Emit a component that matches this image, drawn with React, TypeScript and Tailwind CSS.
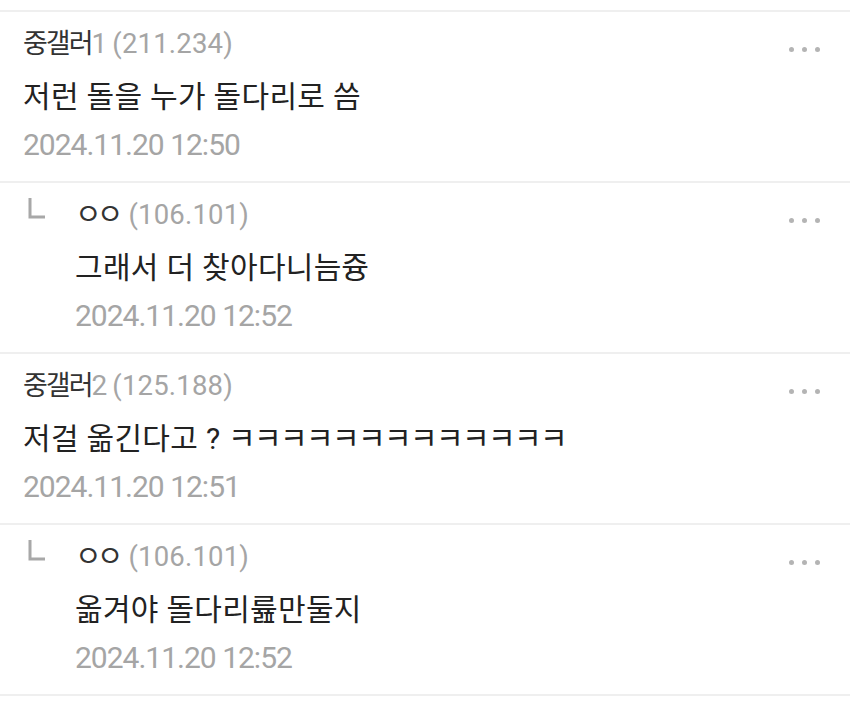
import type { ReactNode } from "react";

type Comment = {
  name: string;
  nameSuffix: string;
  ip: string;
  body: ReactNode;
  date: string;
  reply?: boolean;
};

const comments: Comment[] = [
  { name: "중갤러", nameSuffix: "1", ip: "(211.234)", body: "저런 돌을 누가 돌다리로 씀", date: "2024.11.20 12:50" },
  { name: "ㅇㅇ", nameSuffix: "", ip: "(106.101)", body: "그래서 더 찾아다니늠즁", date: "2024.11.20 12:52", reply: true },
  {
    name: "중갤러",
    nameSuffix: "2",
    ip: "(125.188)",
    body: (
      <>
        저걸 옮긴다고 ?&nbsp;<span className="tracking-[-1.6px]">ㅋㅋㅋㅋㅋㅋㅋㅋㅋㅋㅋㅋㅋ</span>
      </>
    ),
    date: "2024.11.20 12:51",
  },
  { name: "ㅇㅇ", nameSuffix: "", ip: "(106.101)", body: "옮겨야 돌다리륦만둘지", date: "2024.11.20 12:52", reply: true },
];

function MoreDots() {
  return (
    <div className="flex items-center gap-[8px] self-start pt-[21px]">
      <span className="h-[5px] w-[5px] rounded-full bg-[#b4b4b4]" />
      <span className="h-[5px] w-[5px] rounded-full bg-[#b4b4b4]" />
      <span className="h-[5px] w-[5px] rounded-full bg-[#b4b4b4]" />
    </div>
  );
}

function ReplyMark() {
  return (
    <svg width="20" height="22" viewBox="0 0 20 22" className="mt-[1px]">
      <path d="M3 0 V19 H18" fill="none" stroke="#a8a8a8" strokeWidth="3" />
    </svg>
  );
}

function CommentRow({ c }: { c: Comment }) {
  return (
    <div className="flex border-b-2 border-[#efefef] pl-[23px] pr-[30px] pt-[14px] pb-[18px]">
      {c.reply && (
        <div className="w-[52px] shrink-0 pl-[4px]">
          <ReplyMark />
        </div>
      )}
      <div className="flex-1">
        <div className="flex h-[36px] items-center leading-none">
          {c.reply ? (
            <span className="mr-[10px] text-[29px] tracking-[-5px] text-[#333]">{c.name}</span>
          ) : (
            <span className="text-[27px] tracking-[-2px] text-[#333]">{c.name}</span>
          )}
          {c.nameSuffix && <span className="mr-[5px] text-[28px] text-[#a5a5a5]">{c.nameSuffix}</span>}
          <span className="text-[27.5px] tracking-[0.2px] text-[#a5a5a5]">{c.ip}</span>
        </div>
        <div className="mt-[12px] flex h-[46px] items-center text-[30px] leading-none tracking-[0.3px] text-[#222]">
          {c.body}
        </div>
        <div className="mt-[7px] flex h-[36px] items-center text-[30px] leading-none tracking-[-1px] text-[#a5a5a5]">
          {c.date}
        </div>
      </div>
      <MoreDots />
    </div>
  );
}

export default function App() {
  return (
    <div
      className="h-[704px] w-[850px] overflow-hidden bg-white pt-[10px]"
      style={{ fontFamily: "Roboto, 'Noto Sans CJK KR', sans-serif" }}
    >
      <div className="border-t-2 border-[#efefef]">
        {comments.map((c, i) => (
          <CommentRow key={i} c={c} />
        ))}
      </div>
    </div>
  );
}
